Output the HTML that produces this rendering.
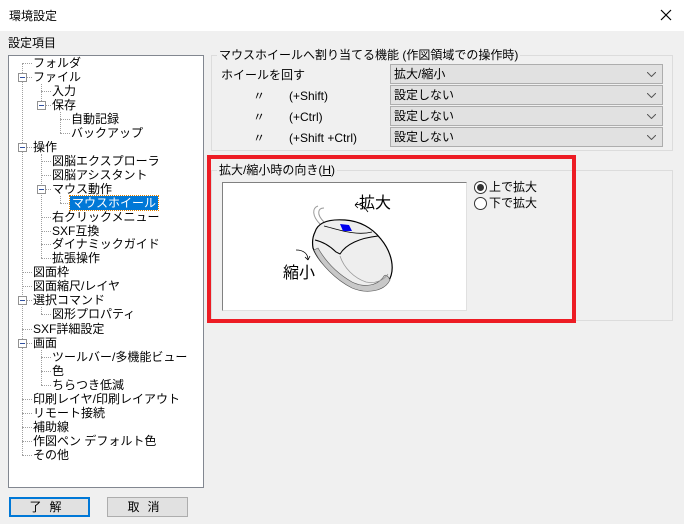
<!DOCTYPE html>
<html><head><meta charset="utf-8"><style>
*{margin:0;padding:0;box-sizing:border-box}
body{width:684px;height:524px;background:#f0f0f0;font-family:"Liberation Sans","Noto Sans CJK JP",sans-serif;font-size:12px;color:#000;position:relative;overflow:hidden}
.a{position:absolute;white-space:nowrap;line-height:14px}
#title{position:absolute;left:0;top:0;width:684px;height:31px;background:#fff}
#tree{position:absolute;left:8px;top:55px;width:196px;height:433px;background:#fff;border:1px solid #828790}
.combo{position:absolute;left:390px;width:273px;height:20px;background:#e1e1e1;border:1px solid #adadad;padding-left:3px;line-height:18px}
.combo svg{position:absolute;right:6px;top:7px}
.grp{position:absolute;border:1px solid #dcdcdc}
.lbl{position:absolute;background:#f0f0f0;padding:0 2px;line-height:14px;white-space:nowrap}
.btn{position:absolute;top:497px;width:81px;height:20px;background:#e1e1e1;border:1px solid #adadad;text-align:center;line-height:18px;letter-spacing:8px}
.pm{position:absolute;width:9px;height:9px;border:1px solid #919191;background:#fff}
.pm:after{content:"";position:absolute;left:1px;top:3px;width:5px;height:1px;background:#3050a0}
.v{position:absolute;border-left:1px dotted #a0a0a0;width:0}
.h{position:absolute;border-top:1px dotted #a0a0a0;height:0}
</style></head><body>
<div id="title"></div>
<div class="a" style="left:9px;top:9px">環境設定</div>
<svg style="position:absolute;left:660px;top:9px" width="12" height="12"><path d="M1 1L11 11M11 1L1 11" stroke="#000" stroke-width="1.2"/></svg>
<div class="a" style="left:8px;top:36px">設定項目</div>
<div id="tree"></div>
<div class="v" style="left:22px;top:63px;height:392px"></div>
<div class="v" style="left:41px;top:84px;height:21px"></div>
<div class="v" style="left:60px;top:112px;height:21px"></div>
<div class="v" style="left:41px;top:154px;height:104px"></div>
<div class="v" style="left:60px;top:196px;height:7px"></div>
<div class="v" style="left:41px;top:307px;height:7px"></div>
<div class="v" style="left:41px;top:350px;height:35px"></div>
<div class="h" style="left:22px;top:63px;width:10px"></div>
<div class="h" style="left:22px;top:77px;width:10px"></div>
<div class="h" style="left:41px;top:91px;width:10px"></div>
<div class="h" style="left:41px;top:105px;width:10px"></div>
<div class="h" style="left:60px;top:119px;width:10px"></div>
<div class="h" style="left:60px;top:133px;width:10px"></div>
<div class="h" style="left:22px;top:147px;width:10px"></div>
<div class="h" style="left:41px;top:161px;width:10px"></div>
<div class="h" style="left:41px;top:175px;width:10px"></div>
<div class="h" style="left:41px;top:189px;width:10px"></div>
<div class="h" style="left:60px;top:203px;width:10px"></div>
<div class="h" style="left:41px;top:217px;width:10px"></div>
<div class="h" style="left:41px;top:231px;width:10px"></div>
<div class="h" style="left:41px;top:244px;width:10px"></div>
<div class="h" style="left:41px;top:258px;width:10px"></div>
<div class="h" style="left:22px;top:272px;width:10px"></div>
<div class="h" style="left:22px;top:286px;width:10px"></div>
<div class="h" style="left:22px;top:300px;width:10px"></div>
<div class="h" style="left:41px;top:314px;width:10px"></div>
<div class="h" style="left:22px;top:329px;width:10px"></div>
<div class="h" style="left:22px;top:343px;width:10px"></div>
<div class="h" style="left:41px;top:357px;width:10px"></div>
<div class="h" style="left:41px;top:371px;width:10px"></div>
<div class="h" style="left:41px;top:385px;width:10px"></div>
<div class="h" style="left:22px;top:399px;width:10px"></div>
<div class="h" style="left:22px;top:413px;width:10px"></div>
<div class="h" style="left:22px;top:427px;width:10px"></div>
<div class="h" style="left:22px;top:441px;width:10px"></div>
<div class="h" style="left:22px;top:455px;width:10px"></div>
<div class="pm" style="left:18px;top:73px"></div>
<div class="pm" style="left:37px;top:101px"></div>
<div class="pm" style="left:18px;top:143px"></div>
<div class="pm" style="left:37px;top:185px"></div>
<div class="pm" style="left:18px;top:296px"></div>
<div class="pm" style="left:18px;top:339px"></div>
<div class="a" style="left:33px;top:56px">フォルダ</div>
<div class="a" style="left:33px;top:70px">ファイル</div>
<div class="a" style="left:52px;top:84px">入力</div>
<div class="a" style="left:52px;top:98px">保存</div>
<div class="a" style="left:71px;top:112px">自動記録</div>
<div class="a" style="left:71px;top:126px">バックアップ</div>
<div class="a" style="left:33px;top:140px">操作</div>
<div class="a" style="left:52px;top:154px">図脳エクスプローラ</div>
<div class="a" style="left:52px;top:168px">図脳アシスタント</div>
<div class="a" style="left:52px;top:182px">マウス動作</div>
<div class="a" style="left:70px;top:196px;background:#0078d7;color:#fff;outline:1px dotted #e08000;padding:0 2px">マウスホイール</div>
<div class="a" style="left:52px;top:210px">右クリックメニュー</div>
<div class="a" style="left:52px;top:224px">SXF互換</div>
<div class="a" style="left:52px;top:237px">ダイナミックガイド</div>
<div class="a" style="left:52px;top:251px">拡張操作</div>
<div class="a" style="left:33px;top:265px">図面枠</div>
<div class="a" style="left:33px;top:279px">図面縮尺/レイヤ</div>
<div class="a" style="left:33px;top:293px">選択コマンド</div>
<div class="a" style="left:52px;top:307px">図形プロパティ</div>
<div class="a" style="left:33px;top:322px">SXF詳細設定</div>
<div class="a" style="left:33px;top:336px">画面</div>
<div class="a" style="left:52px;top:350px">ツールバー/多機能ビュー</div>
<div class="a" style="left:52px;top:364px">色</div>
<div class="a" style="left:52px;top:378px">ちらつき低減</div>
<div class="a" style="left:33px;top:392px">印刷レイヤ/印刷レイアウト</div>
<div class="a" style="left:33px;top:406px">リモート接続</div>
<div class="a" style="left:33px;top:420px">補助線</div>
<div class="a" style="left:33px;top:434px">作図ペン デフォルト色</div>
<div class="a" style="left:33px;top:448px">その他</div>
<div class="btn" style="left:9px;border:2px solid #0078d7;line-height:16px">了解</div>
<div class="btn" style="left:107px">取消</div>

<div class="grp" style="left:211px;top:55px;width:462px;height:96px"></div>
<div class="lbl" style="left:217px;top:48px">マウスホイールへ割り当てる機能 (作図領域での操作時)</div>
<div class="a" style="left:221px;top:68px">ホイールを回す</div>
<div class="a" style="left:253px;top:89px">〃</div><div class="a" style="left:289px;top:89px">(+Shift)</div>
<div class="a" style="left:253px;top:110px">〃</div><div class="a" style="left:289px;top:110px">(+Ctrl)</div>
<div class="a" style="left:253px;top:131px">〃</div><div class="a" style="left:289px;top:131px">(+Shift +Ctrl)</div>
<div class="combo" style="top:64px">拡大/縮小<svg width="9" height="5"><path d="M0 0L4.5 4.5L9 0" fill="none" stroke="#555"/></svg></div>
<div class="combo" style="top:85px">設定しない<svg width="9" height="5"><path d="M0 0L4.5 4.5L9 0" fill="none" stroke="#555"/></svg></div>
<div class="combo" style="top:106px">設定しない<svg width="9" height="5"><path d="M0 0L4.5 4.5L9 0" fill="none" stroke="#555"/></svg></div>
<div class="combo" style="top:127px">設定しない<svg width="9" height="5"><path d="M0 0L4.5 4.5L9 0" fill="none" stroke="#555"/></svg></div>

<div class="grp" style="left:211px;top:170px;width:462px;height:151px"></div>
<div class="lbl" style="left:217px;top:163px">拡大/縮小時の向き(<u>H</u>)</div>
<div style="position:absolute;left:222px;top:182px;width:245px;height:129px;background:#fff;border-top:1px solid #808080;border-left:1px solid #808080;border-right:1px solid #e0e0e0;border-bottom:1px solid #e0e0e0">
<svg width="243" height="127" viewBox="223 183 243 127" style="position:absolute;left:0;top:0">
<path d="M320 224 C312 216 312 208 318 206 M324 222 C316 214 318 208 324 208" fill="none" stroke="#999" stroke-width="1"/>
<path d="M315 232 C318 222 330 219 345 220 C360 221 372 228 380 238 C392 252 396 270 388 282 C380 292 362 293 350 286 C334 276 318 262 313 248 C312 242 313 236 315 232 Z" fill="#eee" stroke="#000" stroke-width="1.2"/>
<path d="M314 250 C320 264 336 280 352 288 C366 294 384 292 390 280 C388 276 386 274 384 276 C378 286 364 288 352 282 C338 274 326 262 318 248 Z" fill="#c8c8c8" stroke="#555" stroke-width="0.6"/>
<path d="M315 240 C324 242 330 246 336 252 L340 254 C346 244 360 238 378 236" fill="none" stroke="#000" stroke-width="1"/>
<path d="M324 226 C340 230 356 236 372 232" fill="none" stroke="#000" stroke-width="0.8"/>
<path d="M340 256 C344 268 354 278 366 282 C376 284 384 280 388 274" fill="none" stroke="#999" stroke-width="0.8"/>
<path d="M340 224 L349 225 L352 231 L343 231 Z" fill="#0000ee"/>
<path d="M368 212 C364 206 360 203 355 205 M355 205 L358 202 M355 205 L358 208" fill="none" stroke="#000" stroke-width="0.8"/>
<path d="M296 250 C304 250 308 254 308 260 M308 260 L305 257 M308 260 L310 256" fill="none" stroke="#000" stroke-width="0.8"/>
<text x="359" y="208" font-size="16" font-family="Noto Sans CJK JP,sans-serif">拡大</text>
<text x="283" y="278" font-size="16" font-family="Noto Sans CJK JP,sans-serif">縮小</text>
</svg></div>
<svg style="position:absolute;left:474px;top:181px" width="14" height="30"><circle cx="6.5" cy="6.5" r="6" fill="#fff" stroke="#333"/><circle cx="6.5" cy="6.5" r="3.5" fill="#333"/><circle cx="6.5" cy="22.5" r="6" fill="#fff" stroke="#333"/></svg>
<div class="a" style="left:489px;top:180px">上で拡大</div>
<div class="a" style="left:489px;top:196px">下で拡大</div>
<div style="position:absolute;left:207px;top:155px;width:369px;height:168px;border:4px solid #ed1c24"></div>
</body></html>
